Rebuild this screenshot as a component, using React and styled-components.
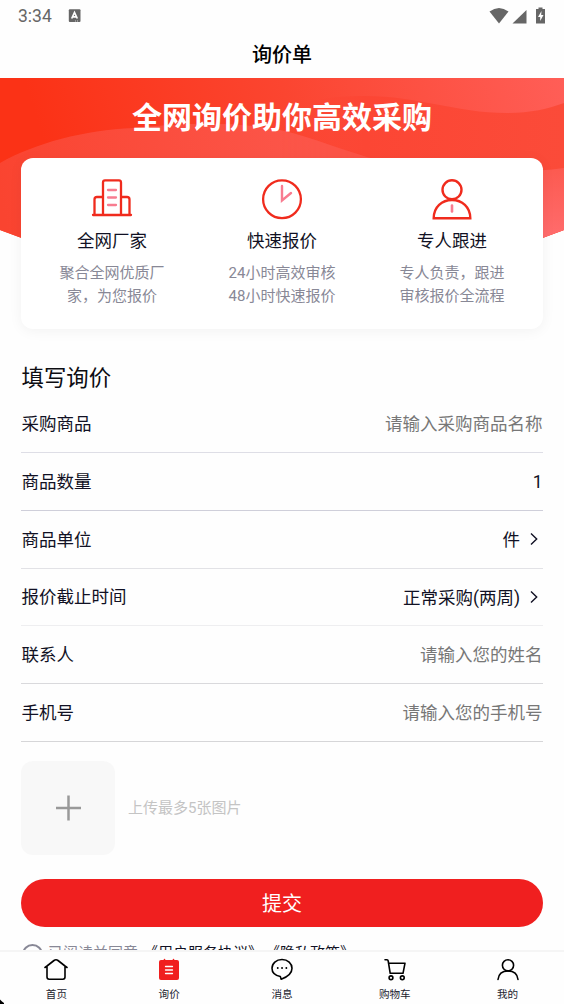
import React, { useState } from "react";
import styled, { createGlobalStyle, css } from "styled-components";

const GlobalStyle = createGlobalStyle`
    * {
        box-sizing: border-box;
    }
    body {
        margin: 0;
        background: #fefefe;
        font-family: Roboto, "Noto Sans CJK SC", sans-serif;
        color: #111124;
    }
    button, input {
        font-family: inherit;
        border: 0;
        padding: 0;
        background: none;
    }
`;

const Screen = styled.div`
    position: relative;
    display: flex;
    flex-direction: column;
    width: 564px;
    height: 1004px;
    overflow: hidden;
    background: #fefefe;
`;

const StatusBar = styled.div`
    display: flex;
    align-items: center;
    flex: none;
    height: 31px;
    padding: 0 17px 0 18px;
    color: #666;
    font-size: 17.5px;
`;

const Clock = styled.span`
    width: 50px;
    padding-top: 2px;
    line-height: 29px;
`;

const StatusIcons = styled.div`
    display: flex;
    align-items: center;
    margin-left: auto;
`;

const Header = styled.h1`
    flex: none;
    height: 47px;
    margin: 0;
    line-height: 48px;
    text-align: center;
    font-size: 20px;
    font-weight: 500;
    color: #000;
`;

const Content = styled.main`
    flex: 1;
    min-height: 0;
    overflow: hidden;
`;

const Hero = styled.section`
    position: relative;
    height: 251px;
    padding: 19px 21px 0;
`;

const HeroWaves = styled.svg`
    position: absolute;
    top: 0;
    left: 0;
`;

const HeroTitle = styled.h2`
    position: relative;
    margin: 0 0 19px;
    line-height: 42px;
    text-align: center;
    font-size: 30px;
    font-weight: 700;
    color: #fff;
`;

const Card = styled.div`
    position: relative;
    display: grid;
    grid-template-columns: repeat(3, 170px);
    justify-content: center;
    height: 171px;
    padding-top: 20px;
    border-radius: 12px;
    background: #fff;
    box-shadow: 0 2px 14px rgba(0, 0, 0, 0.05);
`;

const Feature = styled.div`
    display: flex;
    flex-direction: column;
    align-items: center;
`;

const FeatureName = styled.div`
    margin-top: 8px;
    line-height: 26px;
    font-size: 17.5px;
`;

const FeatureText = styled.div`
    margin-top: 8px;
    line-height: 23px;
    font-size: 15px;
    color: #888896;
    white-space: pre;
    text-align: center;
`;

const Form = styled.section`
    padding: 0 21px;
`;

const FormTitle = styled.h3`
    margin: 0;
    padding: 31px 0 0 0.5px;
    height: 66.2px;
    line-height: 36px;
    font-size: 22.4px;
    font-weight: 400;
    color: #0d0d12;
`;

const Row = styled.label`
    display: flex;
    align-items: center;
    height: 57.8px;
    border-bottom: 1px solid ${(props) => props.$line};
    font-size: 17.5px;
`;

const Label = styled.span`
    padding: 0 0 2px 0.6px;
`;

const Value = styled.span`
    margin-left: auto;
    padding-bottom: 1px;
`;

const Arrow = styled.svg`
    margin: 0 3px 0 8px;
`;

const Input = styled.input`
    flex: 1;
    min-width: 0;
    margin-left: 20px;
    padding: 1px 0.4px 0 0;
    text-align: right;
    font-size: 17.5px;
    color: #111124;
    outline: none;

    &::placeholder {
        color: #777;
    }
`;

const Upload = styled.div`
    display: flex;
    align-items: center;
    gap: 13px;
    margin-top: 19px;
    font-size: 15px;
    color: #c4c4c4;
`;

const UploadButton = styled.button`
    display: flex;
    align-items: center;
    justify-content: center;
    width: 94px;
    height: 94px;
    border-radius: 12px;
    background: #f8f8f8;
`;

const UploadHint = styled.span`
    padding-bottom: 2px;
`;

const Submit = styled.button`
    display: block;
    width: 100%;
    height: 48px;
    margin-top: 24px;
    border-radius: 24px;
    background: #f01f1f;
    font-size: 20px;
    color: #fff;
`;

const Agreement = styled.div`
    display: flex;
    align-items: center;
    margin-top: 14px;
    height: 24px;
    font-size: 15px;
    line-height: 24px;
    color: #888896;
    white-space: pre;
`;

const Radio = styled.span`
    width: 21px;
    height: 21px;
    margin: 4px 5px 0 1px;
    border: 2px solid #888896;
    border-radius: 50%;
`;

const Link = styled.a`
    margin-left: ${(props) => props.$gap}px;
    color: #111124;
`;

const TabBar = styled.nav`
    display: grid;
    grid-template-columns: repeat(5, 1fr);
    flex: none;
    height: 54px;
    border-top: 2px solid #f5f5f5;
    background: #fefefe;
`;

const Tab = styled.button`
    display: flex;
    flex-direction: column;
    align-items: center;
    justify-content: flex-start;
    padding-top: 5.5px;
    font-size: 10.6px;
    line-height: 16px;
    color: #22222e;

    svg {
        flex: none;
        margin-bottom: 5.5px;
        fill: none;
        stroke: #000;
        stroke-width: 1.6;
        stroke-linecap: round;
        stroke-linejoin: round;
    }

    ${(props) => props.$active && css`
        svg {
            stroke: #f01f1f;
        }
    `}
`;

const Pointer = styled.svg`
    position: absolute;
    left: 0;
    bottom: 0;
`;

const Waves = () => (
    <HeroWaves width="564" height="172" viewBox="0 0 564 172">
        <defs>
            <linearGradient id="base" x1="0" y1="0.1" x2="1" y2="0">
                <stop offset="0.05" stopColor="#fb3216" />
                <stop offset="0.5" stopColor="#fb4530" />
                <stop offset="1" stopColor="#ff5e57" />
            </linearGradient>
            <linearGradient id="left" gradientUnits="userSpaceOnUse" x1="0" y1="120" x2="310" y2="60">
                <stop offset="0" stopColor="#fa4430" />
                <stop offset="1" stopColor="#fc564a" />
            </linearGradient>
            <linearGradient id="leftEdge" gradientUnits="userSpaceOnUse" x1="0" y1="0" x2="400" y2="0">
                <stop offset="0.7" stopColor="#fff" />
                <stop offset="1" stopColor="#bbb" />
            </linearGradient>
            <linearGradient id="right" x1="0" y1="0" x2="1" y2="0">
                <stop offset="0" stopColor="#fc4634" stopOpacity="0" />
                <stop offset="0.3" stopColor="#fc4634" />
                <stop offset="1" stopColor="#fb4b39" />
            </linearGradient>
            <linearGradient id="corner" x1="0" y1="0" x2="0" y2="1">
                <stop offset="0" stopColor="#fc5a50" />
                <stop offset="0.8" stopColor="#ff6b6b" />
            </linearGradient>
            <mask id="leftMask">
                <path d="M0 0H564V172H0Z" fill="url(#leftEdge)" />
            </mask>
            <clipPath id="arc">
                <path d="M0 0H564V152Q282 262 0 152Z" />
            </clipPath>
        </defs>
        <g clipPath="url(#arc)">
            <path d="M0 0H564V172H0Z" fill="url(#base)" />
            <path d="M280 34C306 22 330 18 365 18C420 18 455 35 507 35C530 35 548 31 564 25V172H280Z" fill="url(#right)" />
            <path d="M0 85C35 65 85 52 133 50C190 44 255 42 306 59C340 70 370 81 400 88V172H0Z" fill="url(#left)" mask="url(#leftMask)" />
            <path d="M440 172V92Q522 96 564 90V172Z" fill="url(#corner)" />
        </g>
    </HeroWaves>
);

const BuildingIcon = () => (
    <svg width="42" height="42" viewBox="0 0 42 42" fill="none" stroke="#f02b1d" strokeWidth="2.3" strokeLinejoin="round" strokeLinecap="round">
        <path d="M2 37H40M3.5 36.500V21.500Q3.500 19 6 19H12M30 19H36Q38.500 19 38.500 21.500V36.500M12 36.500V4.500Q12 2.300 14 2.300H28Q30 2.300 30 4.500V36.500" />
        <path d="M17 12H25M17 19.500H25M17 27H25" stroke="#f87c90" strokeWidth="2.300" />
    </svg>
);

const ClockIcon = () => (
    <svg width="42" height="42" viewBox="0 0 42 42" fill="none" stroke="#f02b1d" strokeWidth="2.3">
        <circle cx="21" cy="21.200" r="18.900" />
        <path d="M21 8V22.500L30 15" stroke="#f87c90" strokeWidth="2.400" strokeLinecap="round" />
    </svg>
);

const AgentIcon = () => (
    <svg width="42" height="42" viewBox="0 0 42 42" fill="none" stroke="#f02b1d" strokeWidth="2.4">
        <circle cx="21" cy="11.800" r="9.500" />
        <path d="M2.700 40.300C2.700 29 11 22 21 22S39.300 29 39.300 40.300Z" />
        <path d="M21 27.500V33.500" stroke="#f87c90" strokeWidth="2.600" strokeLinecap="round" />
    </svg>
);

const features = [
    { icon: <BuildingIcon />, name: "全网厂家", text: "聚合全网优质厂\n家，为您报价" },
    { icon: <ClockIcon />, name: "快速报价", text: "24小时高效审核\n48小时快速报价" },
    { icon: <AgentIcon />, name: "专人跟进", text: "专人负责，跟进\n审核报价全流程" },
];

const rows = [
    { label: "采购商品", placeholder: "请输入采购商品名称", line: "#dedee6" },
    { label: "商品数量", input: "1", line: "#cfcfda" },
    { label: "商品单位", value: "件", line: "#e2e2e6" },
    { label: "报价截止时间", value: "正常采购(两周)", line: "#eeeef0" },
    { label: "联系人", placeholder: "请输入您的姓名", line: "#d9d9dc" },
    { label: "手机号", placeholder: "请输入您的手机号", line: "#d6d6d8" },
];

const tabs = [
    {
        name: "首页",
        icon: <path d="M1 9.500L3 8L10 2.500Q12 1 14 2.500L21 8L23 9.500M3 8.500V19Q3 21.200 5.200 21.200H18.800Q21 21.200 21 19V8.500" />,
    },
    {
        name: "询价",
        icon: (
            <>
                <rect x="2" y="2" width="20" height="20" rx="2" fill="#f01f1f" stroke="none" />
                <path d="M7.500 1.600V3M16.500 1.600V3" />
                <path d="M8.500 8.500H15.500M8.500 12H15.500M8.500 15.500H15.500" stroke="#fff" strokeWidth="1.300" />
            </>
        ),
    },
    {
        name: "消息",
        icon: (
            <>
                <path d="M12 1.500C6.200 1.500 2 5.400 2 10.300C2 14.800 5.500 17.600 10.300 18.500L11.200 21.300C16.800 19.200 22 15.800 22 10.300C22 5.400 17.800 1.500 12 1.500Z" />
                <path d="M7.700 10H7.800M12 10H12.100M16.300 10H16.400" strokeWidth="1.800" />
            </>
        ),
    },
    {
        name: "购物车",
        icon: (
            <>
                <path d="M2 1.800H4Q5 1.800 5.200 3L7.200 15.300H20L22 5.200H5.600" />
                <circle cx="8" cy="19.800" r="1.900" />
                <circle cx="19.300" cy="19.800" r="1.900" />
            </>
        ),
    },
    {
        name: "我的",
        icon: (
            <>
                <circle cx="12" cy="7.300" r="5.600" />
                <path d="M2 21.500C2.500 16.500 6 13 12 13S21.500 16.500 22 21.500" />
            </>
        ),
    },
];

const App = () => {
    const [active, setActive] = useState("询价");

    return (
        <Screen>
            <GlobalStyle />
            <StatusBar>
                <Clock>3:34</Clock>
                <svg width="13" height="14" viewBox="0 0 13 14">
                    <rect x="0.800" y="0.300" width="11.700" height="12.700" rx="1" fill="#666" />
                    <path d="M3.700 9.500L6.500 3.500L9.300 9.500M4.700 7.800H8.300" fill="none" stroke="#fff" strokeWidth="1.700" />
                    <path d="M7 12H11" stroke="#ccc" strokeDasharray="1 1" />
                </svg>
                <StatusIcons>
                    <svg width="58" height="18" viewBox="0 0 58 18" fill="#666">
                        <path d="M0.500 4.500Q10 -2.500 19.500 4.500L10 16.500Z" />
                        <path d="M37.500 3V16.500H23.500Z" />
                        <path d="M49.500 0.500H53.500V2H56V16.500H47V2H49.500Z" />
                        <path d="M52.500 4L49 10H51.200V14L54.500 8H52.200Z" fill="#fff" />
                    </svg>
                </StatusIcons>
            </StatusBar>
            <Header>询价单</Header>
            <Content>
                <Hero>
                    <Waves />
                    <HeroTitle>全网询价助你高效采购</HeroTitle>
                    <Card>
                        {features.map((item) => (
                            <Feature key={item.name}>
                                {item.icon}
                                <FeatureName>{item.name}</FeatureName>
                                <FeatureText>{item.text}</FeatureText>
                            </Feature>
                        ))}
                    </Card>
                </Hero>
                <Form>
                    <FormTitle>填写询价</FormTitle>
                    {rows.map((row) => (
                        <Row key={row.label} $line={row.line}>
                            <Label>{row.label}</Label>
                            {row.value ? (
                                <>
                                    <Value>{row.value}</Value>
                                    <Arrow width="12" height="14" viewBox="0 0 12 14" fill="none" stroke="#111124" strokeWidth="1.400">
                                        <path d="M3 1.500L8.700 7L3 12.500" />
                                    </Arrow>
                                </>
                            ) : (
                                <Input placeholder={row.placeholder} defaultValue={row.input} />
                            )}
                        </Row>
                    ))}
                    <Upload>
                        <UploadButton aria-label="upload">
                            <svg width="26" height="26" viewBox="0 0 26 26" stroke="#999" strokeWidth="2.500">
                                <path d="M13.500 0.500V25.500M1 13H26" />
                            </svg>
                        </UploadButton>
                        <UploadHint>上传最多5张图片</UploadHint>
                    </Upload>
                    <Submit>提交</Submit>
                    <Agreement>
                        <Radio />
                        已阅读并同意
                        <Link $gap={5}>《用户服务协议》</Link>
                        <Link $gap={2}>《隐私政策》</Link>
                    </Agreement>
                </Form>
            </Content>
            <TabBar>
                {tabs.map((tab) => (
                    <Tab key={tab.name} $active={tab.name === active} onClick={() => setActive(tab.name)}>
                        <svg width="24" height="24" viewBox="0 0 24 24">{tab.icon}</svg>
                        {tab.name}
                    </Tab>
                ))}
            </TabBar>
            <Pointer width="5" height="5" viewBox="0 0 5 5">
                <path d="M0 0.500L2 2.500L4 4V5H0Z" fill="#000" />
            </Pointer>
        </Screen>
    );
};

export default App;
